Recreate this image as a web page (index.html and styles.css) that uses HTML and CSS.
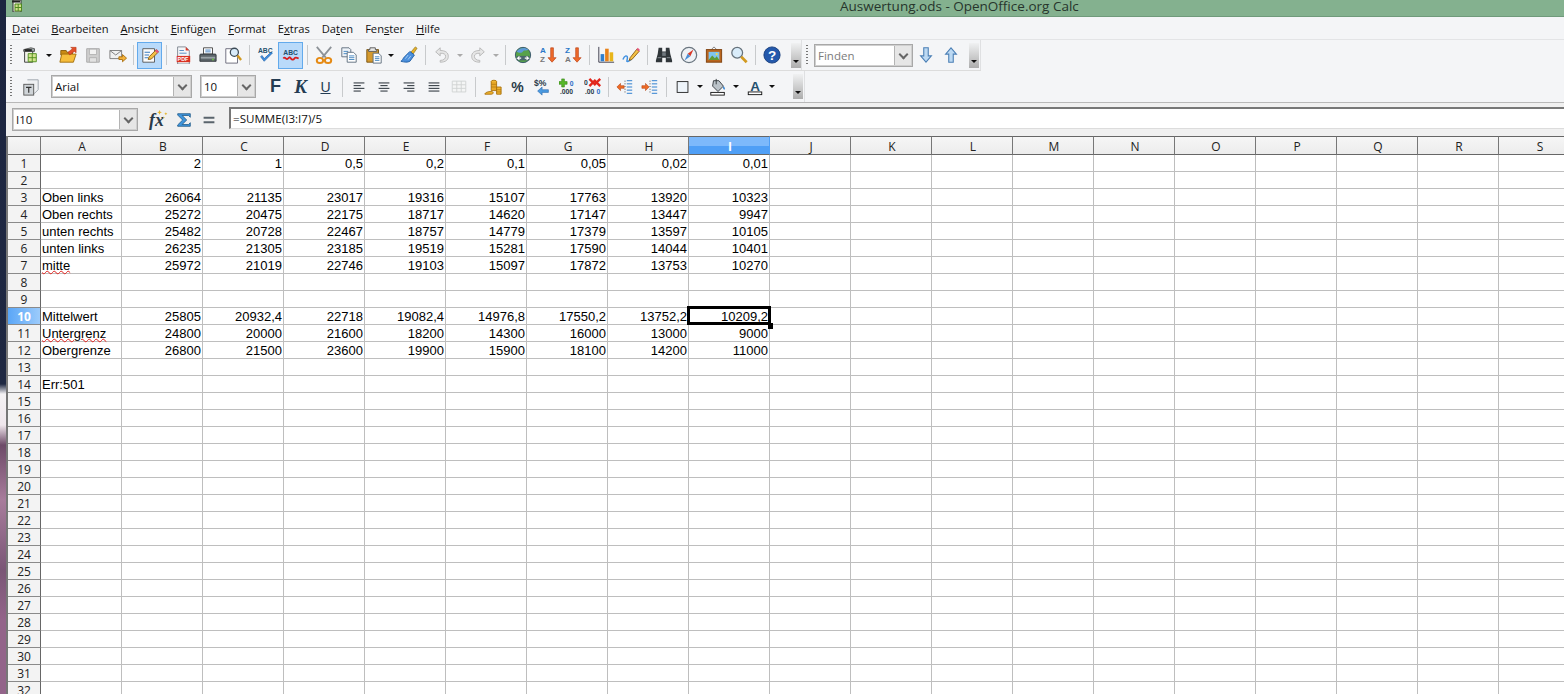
FILE: index.html
```html
<!DOCTYPE html>
<html lang="de">
<head>
<meta charset="utf-8">
<title>Auswertung.ods - OpenOffice.org Calc</title>
<link rel="stylesheet" href="styles.css">
</head>
<body>
<div class="wall"></div>
<div class="app">
  <header class="title">
    <svg class="appicon" viewBox="0 0 12 12"><path d="M2 0h8v12H2z" fill="#f4f4ea" stroke="#333"/><path d="M1 1.500h8" stroke="#222" stroke-width="2"/><path d="M4 4h6.500v7H4z" fill="#cfe08a" stroke="#4f8a1e"/><path d="M7.200 4v7M4 7.500h6.500" stroke="#4f8a1e"/></svg>
    <span class="title-text">Auswertung.ods - OpenOffice.org Calc</span>
  </header>
  <nav class="menu">
    <span><u>D</u>atei</span><span><u>B</u>earbeiten</span><span><u>A</u>nsicht</span><span><u>E</u>infügen</span><span><u>F</u>ormat</span><span>E<u>x</u>tras</span><span>Da<u>t</u>en</span><span>Fen<u>s</u>ter</span><span><u>H</u>ilfe</span>
  </nav>

  <div class="row">
    <div class="tb tb1">
      <i class="grip"></i>
      <span class="i"><svg viewBox="0 0 20 20"><path d="M3 4l8-2 4 1v3H3z" fill="#9aa5a5" stroke="#555"/><path d="M4 6h9v12H4z" fill="#f2f2ea" stroke="#333"/><path d="M4 4.500h8" stroke="#222" stroke-width="2"/><path d="M8 8.500h9v9H8z" fill="#d3e38e" stroke="#4c8c1a"/><path d="M12.500 8.500v9M8 13h9" stroke="#4c8c1a"/></svg></span>
      <span class="d w13"></span>
      <span class="i"><svg viewBox="0 0 20 20"><path d="M2 5h6l1 2h6v3H2z" fill="#c98a12" stroke="#8a5a08"/><path d="M1 18l2-9h16l-3 9z" fill="#f6bd3b" stroke="#a06c0c"/><path d="M10 7l5-4-2-1.500h6v6l-2-1.500-5 4z" fill="#e2502a" stroke="#b23414" stroke-width=".6"/></svg></span>
      <span class="i"><svg viewBox="0 0 20 20"><path d="M3 3h14v15H3z" fill="#cfcfcf" stroke="#a8a8a8"/><path d="M6 3.500h8v6H6z" fill="#f2f2f2" stroke="#b0b0b0"/><path d="M6 13h8v5H6z" fill="#e2e2e2" stroke="#b0b0b0"/></svg></span>
      <span class="i"><svg viewBox="0 0 20 20"><path d="M1 5h13v9H1z" fill="#f0f0f0" stroke="#777"/><path d="M1 5l6.500 5L14 5" fill="none" stroke="#777"/><path d="M11 12h4v-2.500l4.500 4-4.500 4V15h-4z" fill="#f3b23a" stroke="#a96e0e"/></svg></span>
      <span class="s s7"></span>
      <span class="i hl"><svg viewBox="0 0 20 20"><path d="M2 3h13v15H2z" fill="#fbfbfb" stroke="#555"/><path d="M4 7h6M4 10h5M4 13h4" stroke="#3a7bbf" stroke-width="1.200"/><path d="M8 15l1-3 8-8 2.500 2.500-8 8z" fill="#f4c145" stroke="#8a5a10"/><path d="M15.500 5.500l2-2 2.500 2.500-2 2z" fill="#e4577a"/></svg></span>
      <span class="s s8"></span>
      <span class="i"><svg viewBox="0 0 20 20"><path d="M4 1h9l4 4v15H4z" fill="#f4f6f8" stroke="#7d8590"/><path d="M6 5h5M6 8h8" stroke="#4d87bd"/><path d="M13 1l4 4h-4z" fill="#d83a2a"/><rect x="3" y="11" width="15" height="7" fill="#d93223"/><text x="4" y="17" class="pdf">PDF</text></svg></span>
      <span class="i"><svg viewBox="0 0 20 20"><path d="M5 2h10v7H5z" fill="#fff" stroke="#444"/><path d="M7 4.500h6M7 6.500h6" stroke="#3a7bbf"/><path d="M2 9h16a1 1 0 0 1 1 1v7H1v-7a1 1 0 0 1 1-1z" fill="#5d666b" stroke="#30363a"/><path d="M2 13h16" stroke="#9aa3a8" stroke-width="2"/><circle cx="15.500" cy="15" r="1" fill="#6ccb3e"/></svg></span>
      <span class="i"><svg viewBox="0 0 20 20"><path d="M2 3h10l3 3v13H2z" fill="#fff" stroke="#667"/><circle cx="11.500" cy="7" r="4.500" fill="#d9ecfa" stroke="#3c4a55" stroke-width="1.400"/><path d="M15 10.500l4 5" stroke="#d29a20" stroke-width="2.600"/></svg></span>
      <span class="s s8"></span>
      <span class="i"><svg viewBox="0 0 20 20"><text x="1" y="8" class="abc">ABC</text><path d="M4 12l4 5 9-9-1.500-1L8 14l-2.500-3.500z" fill="#3f8fe0" stroke="#1d5ea6" stroke-width=".7"/></svg></span>
      <span class="i hl"><svg viewBox="0 0 20 20"><text x="1.500" y="10" class="abc">ABC</text><path d="M1.500 14c2-3 3 2 5 0s2-2 3.500 0 3 1 4-.5 2-1 4.500 .5" fill="none" stroke="#d81e1e" stroke-width="2"/></svg></span>
      <span class="s s8"></span>
      <span class="i"><svg viewBox="0 0 20 20"><path d="M2 1l10 12M18 1L8 13" stroke="#8d9298" stroke-width="2"/><ellipse cx="5.500" cy="16" rx="3.500" ry="2.800" fill="none" stroke="#e58a14" stroke-width="2.200"/><ellipse cx="14.500" cy="16" rx="3.500" ry="2.800" fill="none" stroke="#e58a14" stroke-width="2.200"/></svg></span>
      <span class="i"><svg viewBox="0 0 20 20"><path d="M2 2h8l2 2v8H2z" fill="#eef3f8" stroke="#5b6b7a"/><path d="M4 6h5M4 8.500h5" stroke="#3f83c0"/><path d="M8 7h7l3 3v8H8z" fill="#fff" stroke="#5b6b7a"/><path d="M10 11h6M10 13h6M10 15h6" stroke="#3f83c0"/></svg></span>
      <span class="i"><svg viewBox="0 0 20 20"><path d="M2 4h13v14H2z" fill="#d59a2e" stroke="#77510e"/><path d="M5.500 4V2h6v2h1.500v2H4V4z" fill="#e8e8e8" stroke="#555"/><path d="M9 8h6l3 3v8H9z" fill="#fff" stroke="#5b6b7a"/><path d="M11 12h5M11 14h5M11 16h5" stroke="#3f83c0"/></svg></span>
      <span class="d w10"></span>
      <span class="i"><svg viewBox="0 0 20 20"><path d="M12 7l5-6 2 1.500-4.500 6.500z" fill="#e5b22a" stroke="#8b6a10" stroke-width=".7"/><path d="M11 6l5 4-5 7c-3 1.500-6 1-10 0 2-1 2-3 4-5z" fill="#4b8fdc" stroke="#1f5da5"/><path d="M6 14l3-4M9 15l3-4" stroke="#a9d0f5"/></svg></span>
      <span class="s s8"></span>
      <span class="i"><svg viewBox="0 0 20 20"><path d="M8 2L3 6.500 8 11V8c4 0 6 1 6 3.500S12 16 8 16v2c6 0 9-2.500 9-6.500S14 5 8 5z" fill="#e6e6e6" stroke="#b5b5b5"/></svg></span>
      <span class="d w11 off"></span>
      <span class="i"><svg viewBox="0 0 20 20"><path d="M12 2l5 4.500L12 11V8C8 8 6 9 6 11.500S8 16 12 16v2c-6 0-9-2.500-9-6.500S6 5 12 5z" fill="#e6e6e6" stroke="#b5b5b5"/></svg></span>
      <span class="d w11 off"></span>
      <span class="s s9"></span>
      <span class="i"><svg viewBox="0 0 20 20"><circle cx="10" cy="10" r="8.500" fill="#57a24a" stroke="#33506a"/><path d="M3 6c3-4 9-5 13-2-2 2-5 0-6 2s-5 2-7 0z" fill="#5d9ad8"/><path d="M3 11h14v5H3z" fill="#49606f" opacity=".9"/><path d="M8 13.500H4l2-2M4 13.500l2 2M12 13.500h4l-2-2M16 13.500l-2 2" fill="none" stroke="#fff" stroke-width="1.200"/></svg></span>
      <span class="i"><svg viewBox="0 0 20 20"><text x="1" y="8" class="az az-a">A</text><text x="1" y="18" class="az az-z">Z</text><path d="M13 2v11h-3l4.500 5 4.500-5h-3V2z" fill="#ef6a2a" stroke="#b73c10" stroke-width=".7"/></svg></span>
      <span class="i"><svg viewBox="0 0 20 20"><text x="1" y="8" class="az az-b">Z</text><text x="1" y="18" class="az az-g">A</text><path d="M13 2v11h-3l4.500 5 4.500-5h-3V2z" fill="#ef6a2a" stroke="#b73c10" stroke-width=".7"/></svg></span>
      <span class="s s8"></span>
      <span class="i"><svg viewBox="0 0 20 20"><path d="M2 1v17h17" fill="none" stroke="#334"/><rect x="4" y="9" width="4" height="8" fill="#2f7fcf"/><rect x="9" y="3" width="4" height="14" fill="#e8821a"/><rect x="14" y="7" width="4" height="10" fill="#e8b51a"/></svg></span>
      <span class="i"><svg viewBox="0 0 20 20"><path d="M1 15c2-5 5-5 5-2s-2 5 1 4 4-4 5-4" fill="none" stroke="#3f8fe0" stroke-width="1.600"/><path d="M9 13l-1 3 3-1 8-9-2.500-2.500z" fill="#f4c145" stroke="#8a5a10"/><path d="M16 3.500l1.500-1.500 2.500 2.500-1.500 1.500z" fill="#e4577a"/></svg></span>
      <span class="s s8"></span>
      <span class="i"><svg viewBox="0 0 20 20"><path d="M4 2h4v4h4V2h4l1 7 2 7v2h-7v-5H8v5H1v-2l2-7z" fill="#30363a"/><rect x="8" y="7" width="4" height="4" fill="#70787e"/><path d="M3 13h4M13 13h4" stroke="#8c959a"/></svg></span>
      <span class="i"><svg viewBox="0 0 20 20"><circle cx="10" cy="10" r="8.500" fill="#eef2f6" stroke="#6b7680" stroke-width="1.400"/><path d="M15 4l-3.500 7.500-3-3z" fill="#d93a2a"/><path d="M5 16l3.500-7.500 3 3z" fill="#4a8ed6"/></svg></span>
      <span class="i"><svg viewBox="0 0 20 20"><path d="M7 4l3-3 3 3" fill="none" stroke="#777"/><rect x="1.500" y="4" width="17" height="14" fill="#b9651e" stroke="#7d3f0c"/><rect x="4" y="6.500" width="12" height="9" fill="#7fc4ee"/><path d="M4 15.500l4-5 3 3 2-2 3 4z" fill="#5f9b35"/><circle cx="13" cy="9" r="1.200" fill="#f7d94a"/></svg></span>
      <span class="i"><svg viewBox="0 0 20 20"><circle cx="8" cy="7.500" r="6" fill="#d9ecfa" stroke="#66727c" stroke-width="1.400"/><path d="M12.500 12l6 6" stroke="#d29a20" stroke-width="3"/></svg></span>
      <span class="s s8"></span>
      <span class="i"><svg viewBox="0 0 20 20"><circle cx="10" cy="10" r="9" fill="#2459ac" stroke="#173d7c"/><text x="10" y="15.500" class="help">?</text></svg></span>
      <span class="more more1"></span>
    </div>
    <div class="tb find">
      <i class="grip"></i>
      <div class="combo c-find"><span class="ph">Finden</span><b></b></div>
      <span class="i"><svg viewBox="0 0 20 20"><path d="M7.500 2h5v9H16l-6 7-6-7h3.500z" fill="#bcd9f3" stroke="#4b7fb5" stroke-width="1.200"/></svg></span>
      <span class="i"><svg viewBox="0 0 20 20"><path d="M7.500 18h5V9H16l-6-7-6 7h3.500z" fill="#bcd9f3" stroke="#4b7fb5" stroke-width="1.200"/></svg></span>
      <span class="more more2"></span>
    </div>
  </div>

  <div class="row row2">
    <div class="tb tb2">
      <i class="grip"></i>
      <span class="i"><svg viewBox="0 0 20 20"><path d="M6 2h12v11l-4 4H9" fill="#eef0f2" stroke="#9aa3aa"/><rect x="2" y="7" width="11" height="12" fill="#cfd4d8" stroke="#555"/><path d="M4.500 10.500h6M7.500 10.500v6" stroke="#333" stroke-width="1.300"/></svg></span>
      <div class="combo c-font"><span>Arial</span><b></b></div>
      <div class="combo c-size"><span>10</span><b></b></div>
      <span class="i fmt f-b">F</span>
      <span class="i fmt f-i">K</span>
      <span class="i fmt f-u">U</span>
      <span class="s s8"></span>
      <span class="i"><svg viewBox="0 0 20 20"><path d="M4 5h12M4 8h8M4 11h12M4 14h8" stroke="#222a33" stroke-width="1.100" transform="translate(0 .5)"/></svg></span>
      <span class="i"><svg viewBox="0 0 20 20"><path d="M4 5h12M6 8h8M4 11h12M6 14h8" stroke="#222a33" stroke-width="1.100" transform="translate(0 .5)"/></svg></span>
      <span class="i"><svg viewBox="0 0 20 20"><path d="M4 5h12M8 8h8M4 11h12M8 14h8" stroke="#222a33" stroke-width="1.100" transform="translate(0 .5)"/></svg></span>
      <span class="i"><svg viewBox="0 0 20 20"><path d="M4 5h12M4 8h12M4 11h12M4 14h12" stroke="#222a33" stroke-width="1.100" transform="translate(0 .5)"/></svg></span>
      <span class="i"><svg viewBox="0 0 20 20"><path d="M2.500 3.500h15v12h-15zM2.500 7.500h15M2.500 11.500h15M7.500 3.500v12M12.500 3.500v12" fill="#f4f5f5" stroke="#cfd3d3"/></svg></span>
      <span class="s s9"></span>
      <span class="i"><svg viewBox="0 0 20 20"><ellipse cx="11" cy="4" rx="3" ry="1.500" fill="#f3c23c" stroke="#a9710c"/><path d="M8 4v10h6V4" fill="#e9a827" stroke="#a9710c"/><path d="M14 10h5v8h-5z" fill="#f0b42e" stroke="#a9710c"/><path d="M1 18c0-2 4-3 7-3s3 3 0 3z" fill="#f0b42e" stroke="#a9710c"/><path d="M8 7h6M8 10h6M14 13h5M14 15.500h5" stroke="#a9710c" stroke-width=".7"/></svg></span>
      <span class="i fmt f-pct">%</span>
      <span class="i"><svg viewBox="0 0 20 20"><text x="0" y="9" class="mono">$%</text><path d="M9 11h7v3H9v3l-5-4.500L9 8z" fill="#4a9ae0" stroke="#1d5ea6" stroke-width=".6" transform="translate(0 2)"/></svg></span>
      <span class="i"><svg viewBox="0 0 20 20"><path d="M3 1h3v3h3v3H6v3H3V7H0V4h3z" fill="#58b82a" stroke="#2c7c0c" stroke-width=".6"/><text x="12" y="9" class="dec blue">0</text><text x="1" y="18" class="dec">.000</text></svg></span>
      <span class="i"><svg viewBox="0 0 20 20"><text x="0" y="8" class="dec">0</text><path d="M6 1l6 6 6-6M6 9l6-6 6 6" fill="none" stroke="#e2261c" stroke-width="2.600"/><text x="1" y="18" class="dec">.00</text><text x="14" y="18" class="dec blue">0</text></svg></span>
      <span class="s s7"></span>
      <span class="i"><svg viewBox="0 0 20 20"><path d="M12 3h6M12 6.500h6M12 10h6M12 13.500h6M12 17h6" stroke="#2f7fcf" stroke-width="1.100"/><path d="M10 3v14" stroke="#333" stroke-dasharray="1 2"/><path d="M9 8.500H5V6l-4 4 4 4v-2.500h4z" fill="#ee6a24" stroke="#b03c0c" stroke-width=".6"/></svg></span>
      <span class="i"><svg viewBox="0 0 20 20"><path d="M12 3h6M12 6.500h6M12 10h6M12 13.500h6M12 17h6" stroke="#2f7fcf" stroke-width="1.100"/><path d="M10 3v14" stroke="#333" stroke-dasharray="1 2"/><path d="M1 8.500h4V6l4 4-4 4v-2.500H1z" fill="#ee6a24" stroke="#b03c0c" stroke-width=".6"/></svg></span>
      <span class="s s8"></span>
      <span class="i"><svg viewBox="0 0 20 20"><rect x="3.500" y="4" width="12" height="12" fill="#eef4fa" stroke="#222"/></svg></span>
      <span class="d w10"></span>
      <span class="i"><svg viewBox="0 0 20 20"><path d="M5 3h6l5 6-6 6-6-6z" fill="#bcc4ca" stroke="#30363a"/><path d="M8 1v6" stroke="#30363a"/><path d="M16 9c2 2 2 4 1 4s-2-2-1-4z" fill="#2f7fcf"/><rect x="2" y="16" width="15" height="3" fill="#fff" stroke="#111"/></svg></span>
      <span class="d w12"></span>
      <span class="i"><svg viewBox="0 0 20 20"><text x="10" y="14" class="acol">A</text><rect x="2.500" y="15.500" width="15" height="3" fill="#fff" stroke="#111"/></svg></span>
      <span class="d w10"></span>
      <span class="more more3"></span>
    </div>
  </div>

  <div class="fbar">
    <div class="combo c-name"><span>I10</span><b></b></div>
    <span class="i"><svg class="big" viewBox="0 0 20 20"><text x="1" y="16" class="fx">fx</text><path d="M11 1l.7 1.500 1.500.7-1.500.7L11 5.500l-.7-1.600-1.500-.7 1.500-.7zM17 3l.5 1 1 .5-1 .5-.5 1-.5-1-1-.5 1-.5zM15 7l.4.800.800.400-.800.400-.4.800-.4-.800-.800-.400.800.400z" fill="#e6b42a"/></svg></span>
    <span class="i"><svg viewBox="0 0 20 20"><path d="M3 3h14v4l-2-2H8l5 5-5 5h7l2-2v4H3v-1.500L8.500 10 3 4.500z" fill="#3f95dc" stroke="#14507f" stroke-width=".8"/></svg></span>
    <span class="i"><svg viewBox="0 0 20 20"><path d="M4 7.500h12M4 12.500h12" stroke="#5a646c" stroke-width="2"/></svg></span>
    <div class="finput">=SUMME(I3:I7)/5</div>
  </div>

  <div class="sheet">
    <table class="grid">
      <colgroup><col class="c0"><col span="19" class="cn"></colgroup>
      <thead>
        <tr><th></th><th>A</th><th>B</th><th>C</th><th>D</th><th>E</th><th>F</th><th>G</th><th>H</th><th class="sel">I</th><th>J</th><th>K</th><th>L</th><th>M</th><th>N</th><th>O</th><th>P</th><th>Q</th><th>R</th><th>S</th></tr>
      </thead>
      <tbody>
        <tr><th>1</th><td></td><td>2</td><td>1</td><td>0,5</td><td>0,2</td><td>0,1</td><td>0,05</td><td>0,02</td><td>0,01</td><td></td><td></td><td></td><td></td><td></td><td></td><td></td><td></td><td></td><td></td></tr>
        <tr><th>2</th><td></td><td></td><td></td><td></td><td></td><td></td><td></td><td></td><td></td><td></td><td></td><td></td><td></td><td></td><td></td><td></td><td></td><td></td><td></td></tr>
        <tr><th>3</th><td>Oben links</td><td>26064</td><td>21135</td><td>23017</td><td>19316</td><td>15107</td><td>17763</td><td>13920</td><td>10323</td><td></td><td></td><td></td><td></td><td></td><td></td><td></td><td></td><td></td><td></td></tr>
        <tr><th>4</th><td>Oben rechts</td><td>25272</td><td>20475</td><td>22175</td><td>18717</td><td>14620</td><td>17147</td><td>13447</td><td>9947</td><td></td><td></td><td></td><td></td><td></td><td></td><td></td><td></td><td></td><td></td></tr>
        <tr><th>5</th><td>unten rechts</td><td>25482</td><td>20728</td><td>22467</td><td>18757</td><td>14779</td><td>17379</td><td>13597</td><td>10105</td><td></td><td></td><td></td><td></td><td></td><td></td><td></td><td></td><td></td><td></td></tr>
        <tr><th>6</th><td>unten links</td><td>26235</td><td>21305</td><td>23185</td><td>19519</td><td>15281</td><td>17590</td><td>14044</td><td>10401</td><td></td><td></td><td></td><td></td><td></td><td></td><td></td><td></td><td></td><td></td></tr>
        <tr><th>7</th><td><span class="wavy">mitte</span></td><td>25972</td><td>21019</td><td>22746</td><td>19103</td><td>15097</td><td>17872</td><td>13753</td><td>10270</td><td></td><td></td><td></td><td></td><td></td><td></td><td></td><td></td><td></td><td></td></tr>
        <tr><th>8</th><td></td><td></td><td></td><td></td><td></td><td></td><td></td><td></td><td></td><td></td><td></td><td></td><td></td><td></td><td></td><td></td><td></td><td></td><td></td></tr>
        <tr><th>9</th><td></td><td></td><td></td><td></td><td></td><td></td><td></td><td></td><td></td><td></td><td></td><td></td><td></td><td></td><td></td><td></td><td></td><td></td><td></td></tr>
        <tr><th class="sel">10</th><td>Mittelwert</td><td>25805</td><td>20932,4</td><td>22718</td><td>19082,4</td><td>14976,8</td><td>17550,2</td><td>13752,2</td><td class="cur">10209,2</td><td></td><td></td><td></td><td></td><td></td><td></td><td></td><td></td><td></td><td></td></tr>
        <tr><th>11</th><td><span class="wavy">Untergrenz</span></td><td>24800</td><td>20000</td><td>21600</td><td>18200</td><td>14300</td><td>16000</td><td>13000</td><td>9000</td><td></td><td></td><td></td><td></td><td></td><td></td><td></td><td></td><td></td><td></td></tr>
        <tr><th>12</th><td>Obergrenze</td><td>26800</td><td>21500</td><td>23600</td><td>19900</td><td>15900</td><td>18100</td><td>14200</td><td>11000</td><td></td><td></td><td></td><td></td><td></td><td></td><td></td><td></td><td></td><td></td></tr>
        <tr><th>13</th><td></td><td></td><td></td><td></td><td></td><td></td><td></td><td></td><td></td><td></td><td></td><td></td><td></td><td></td><td></td><td></td><td></td><td></td><td></td></tr>
        <tr><th>14</th><td>Err:501</td><td></td><td></td><td></td><td></td><td></td><td></td><td></td><td></td><td></td><td></td><td></td><td></td><td></td><td></td><td></td><td></td><td></td><td></td></tr>
        <tr><th>15</th><td></td><td></td><td></td><td></td><td></td><td></td><td></td><td></td><td></td><td></td><td></td><td></td><td></td><td></td><td></td><td></td><td></td><td></td><td></td></tr>
        <tr><th>16</th><td></td><td></td><td></td><td></td><td></td><td></td><td></td><td></td><td></td><td></td><td></td><td></td><td></td><td></td><td></td><td></td><td></td><td></td><td></td></tr>
        <tr><th>17</th><td></td><td></td><td></td><td></td><td></td><td></td><td></td><td></td><td></td><td></td><td></td><td></td><td></td><td></td><td></td><td></td><td></td><td></td><td></td></tr>
        <tr><th>18</th><td></td><td></td><td></td><td></td><td></td><td></td><td></td><td></td><td></td><td></td><td></td><td></td><td></td><td></td><td></td><td></td><td></td><td></td><td></td></tr>
        <tr><th>19</th><td></td><td></td><td></td><td></td><td></td><td></td><td></td><td></td><td></td><td></td><td></td><td></td><td></td><td></td><td></td><td></td><td></td><td></td><td></td></tr>
        <tr><th>20</th><td></td><td></td><td></td><td></td><td></td><td></td><td></td><td></td><td></td><td></td><td></td><td></td><td></td><td></td><td></td><td></td><td></td><td></td><td></td></tr>
        <tr><th>21</th><td></td><td></td><td></td><td></td><td></td><td></td><td></td><td></td><td></td><td></td><td></td><td></td><td></td><td></td><td></td><td></td><td></td><td></td><td></td></tr>
        <tr><th>22</th><td></td><td></td><td></td><td></td><td></td><td></td><td></td><td></td><td></td><td></td><td></td><td></td><td></td><td></td><td></td><td></td><td></td><td></td><td></td></tr>
        <tr><th>23</th><td></td><td></td><td></td><td></td><td></td><td></td><td></td><td></td><td></td><td></td><td></td><td></td><td></td><td></td><td></td><td></td><td></td><td></td><td></td></tr>
        <tr><th>24</th><td></td><td></td><td></td><td></td><td></td><td></td><td></td><td></td><td></td><td></td><td></td><td></td><td></td><td></td><td></td><td></td><td></td><td></td><td></td></tr>
        <tr><th>25</th><td></td><td></td><td></td><td></td><td></td><td></td><td></td><td></td><td></td><td></td><td></td><td></td><td></td><td></td><td></td><td></td><td></td><td></td><td></td></tr>
        <tr><th>26</th><td></td><td></td><td></td><td></td><td></td><td></td><td></td><td></td><td></td><td></td><td></td><td></td><td></td><td></td><td></td><td></td><td></td><td></td><td></td></tr>
        <tr><th>27</th><td></td><td></td><td></td><td></td><td></td><td></td><td></td><td></td><td></td><td></td><td></td><td></td><td></td><td></td><td></td><td></td><td></td><td></td><td></td></tr>
        <tr><th>28</th><td></td><td></td><td></td><td></td><td></td><td></td><td></td><td></td><td></td><td></td><td></td><td></td><td></td><td></td><td></td><td></td><td></td><td></td><td></td></tr>
        <tr><th>29</th><td></td><td></td><td></td><td></td><td></td><td></td><td></td><td></td><td></td><td></td><td></td><td></td><td></td><td></td><td></td><td></td><td></td><td></td><td></td></tr>
        <tr><th>30</th><td></td><td></td><td></td><td></td><td></td><td></td><td></td><td></td><td></td><td></td><td></td><td></td><td></td><td></td><td></td><td></td><td></td><td></td><td></td></tr>
        <tr><th>31</th><td></td><td></td><td></td><td></td><td></td><td></td><td></td><td></td><td></td><td></td><td></td><td></td><td></td><td></td><td></td><td></td><td></td><td></td><td></td></tr>
        <tr><th>32</th><td></td><td></td><td></td><td></td><td></td><td></td><td></td><td></td><td></td><td></td><td></td><td></td><td></td><td></td><td></td><td></td><td></td><td></td><td></td></tr>
      </tbody>
    </table>
  </div>
</div>
</body>
</html>
```
FILE: styles.css
```css
* { box-sizing: border-box; }
html, body { height: 100%; }
body {
  margin: 0;
  display: flex;
  overflow: hidden;
  background: #fff;
  font-family: "Open Sans", "Noto Sans", sans-serif;
  color: #111;
}

/* Desktop wallpaper visible at the left of the window */
.wall {
  flex: 0 0 6px;
  background: linear-gradient(to bottom, #1c2540 0, #1f2842 384px, #f4f2f4 394px, #efe6ec 425px, #6d4a68 445px, #a87c9c 500px, #7a5676 570px, #93648a 620px, #93648a 694px);
}

.app {
  flex: 1;
  min-width: 0;
  display: flex;
  flex-direction: column;
  background: #f4f5f7;
}

/* Title bar */
.title {
  flex: 0 0 17px;
  display: flex;
  background: #84b18f;
  border-bottom: 1px solid #6f9a7b;
  overflow: hidden;
}
.appicon { width: 12px; height: 12px; margin-left: 5px; flex: none; }
.title-text {
  margin-left: 817px;
  font-size: 13.500px;
  line-height: 13px;
  color: #27352c;
  white-space: nowrap;
}

/* Menu bar */
.menu {
  flex: 0 0 23px;
  display: flex;
  align-items: center;
  padding-left: 6px;
  border-bottom: 1px solid #e3e4e6;
  font-size: 11.150px;
  color: #111;
}
.menu span { margin-right: 12px; white-space: nowrap; }

/* Toolbars */
.row { flex: 0 0 31px; display: flex; border-bottom: 1px solid #dcdcdc; width: 975px; }
.row2 { border-bottom: 0; width: 100%; }
.tb { display: flex; align-items: center; height: 30px; }
.tb1 { width: 796px; border-right: 1px solid #dfe0e2; }
.tb2 { width: 799px; height: 31px; border-right: 1px solid #dfe0e2; }
.find { flex: 1; border-right: 1px solid #dfe0e2; }
.grip {
  flex: none;
  width: 2px;
  height: 20px;
  margin: 0 5px 0 4px;
  background: repeating-linear-gradient(to bottom, #777 0 1px, transparent 1px 3px);
}
.tb2 .grip { margin-right: 6px; }
.find .grip { margin-right: 6px; }

.i {
  flex: 0 0 25px;
  height: 27px;
  display: flex;
  align-items: center;
  justify-content: center;
}
.i svg { width: 18px; height: 18px; display: block; }
.i svg.big { width: 21px; height: 21px; }
.hl { background: #b9dafa; border: 1px solid #63aaec; }

.d { flex: none; height: 27px; display: flex; align-items: center; justify-content: center; }
.d::after {
  content: "";
  border: 3px solid transparent;
  border-top: 3px solid #111;
  border-bottom: 0;
  border-left-width: 3.500px;
  border-right-width: 3.500px;
}
.d.off::after { border-top-color: #aaa; }
.w10 { width: 10px; }
.w11 { width: 11px; }
.w12 { width: 12px; }
.w13 { width: 13px; }

.s { flex: none; height: 20px; display: flex; justify-content: center; }
.s::after { content: ""; width: 1px; background: #c8cacc; }
.s7 { width: 7px; }
.s8 { width: 8px; }
.s9 { width: 9px; }

.more {
  flex: none;
  width: 10px;
  height: 25px;
  display: flex;
  align-items: flex-end;
  justify-content: center;
  padding-bottom: 5px;
  background: linear-gradient(to bottom, #f0f1f2, #adadad);
}
.more::after {
  content: "";
  border: 3.500px solid transparent;
  border-top: 3px solid #111;
  border-bottom: 0;
}
.more1 { margin-left: 7px; }
.more2 { margin-left: 6px; }
.more3 { margin-left: 16px; }

/* Combo boxes */
.combo {
  flex: none;
  display: flex;
  align-items: center;
  justify-content: space-between;
  background: #fff;
  border: 1px solid #a8a8a8;
  box-shadow: inset 0 0 0 1px #cfcfcf;
  padding: 1px 1px 1px 3px;
  height: 23px;
  font-size: 11.500px;
  color: #111;
}
.combo b {
  flex: none;
  width: 17px;
  height: 100%;
  display: flex;
  align-items: center;
  justify-content: center;
  background: #e6e6e6;
  border-left: 1px solid #b4b4b4;
}
.combo b::after {
  content: "";
  width: 5px;
  height: 5px;
  margin-top: -2px;
  border-right: 2px solid #666;
  border-bottom: 2px solid #666;
  transform: rotate(45deg);
}
.c-font { width: 141px; margin-left: 8px; }
.c-size { width: 56px; margin: 0 7px 0 8px; }
.c-find { width: 99px; }
.c-name { width: 126px; margin: 5px 8px 0 6px; height: 23px; font-size: 11.500px; }
.ph { color: #7c7c7c; }

/* Character format buttons */
.fmt { font-family: "Liberation Sans", sans-serif; color: #243c52; font-size: 15px; }
.f-b { font-weight: 700; font-size: 18px; }
.f-i { font-style: italic; font-weight: 700; font-family: "Liberation Serif", serif; font-size: 19px; }
.f-u { text-decoration: underline; font-size: 14px; }
.f-pct { font-weight: 700; font-size: 14px; color: #2a3a48; }

/* Text inside icons */
.pdf { font: 700 6px "Liberation Sans", sans-serif; fill: #fff; }
.abc { font: 700 7.500px "Liberation Sans", sans-serif; fill: #24506e; }
.az { font: 700 9px "Liberation Sans", sans-serif; }
.az-a { fill: #2a78c8; }
.az-z { fill: #777; }
.az-b { fill: #2a78c8; }
.az-g { fill: #777; }
.help { font: 700 15px "Liberation Sans", sans-serif; fill: #fff; text-anchor: middle; }
.mono { font: 700 9.500px "Liberation Sans", sans-serif; fill: #2a3a48; }
.dec { font: 700 7.500px "Liberation Sans", sans-serif; fill: #2a3a48; }
.blue { fill: #2a6ec8; }
.acol { font: 700 15px "Liberation Sans", sans-serif; fill: #24506e; text-anchor: middle; }
.fx { font: italic 700 17px "Liberation Serif", serif; fill: #2a3a48; }

/* Formula bar */
.fbar {
  flex: 0 0 34px;
  display: flex;
  align-items: flex-start;
  background: #f0f0f0;
  border-top: 1px solid #b8b8b8;
  font-size: 12px;
}
.fbar .i { margin-top: 3px; }
.finput {
  flex: 1;
  height: 22px;
  margin: 4px 0 0 8px;
  padding: 1px 0 0 2px;
  background: #fff;
  border-top: 2px solid #777;
  border-left: 2px solid #777;
  border-bottom: 1px solid #dcdcdc;
  font-size: 11.600px;
  line-height: 17px;
  white-space: nowrap;
}

/* Sheet */
.sheet {
  flex: 1;
  min-height: 0;
  overflow: hidden;
  background: #fff;
  border-left: 2px solid #777;
}
.grid {
  table-layout: fixed;
  width: 1572px;
  border-collapse: separate;
  border-spacing: 0;
  font-family: "Liberation Sans", Arial, sans-serif;
  font-size: 13px;
  color: #000;
}
.c0 { width: 33px; }
.cn { width: 81px; }
.grid tr { height: 17px; }
.grid th, .grid td {
  padding: 2px 0 0;
  height: 17px;
  line-height: 14px;
  overflow: visible;
  white-space: nowrap;
}
.grid td {
  padding: 2px 1px 0;
  text-align: right;
  border-right: 1px solid #bebebe;
  border-bottom: 1px solid #bebebe;
}
.grid td:nth-child(2) { text-align: left; }
.grid th {
  font-family: "Open Sans", "Noto Sans", sans-serif;
  font-weight: 400;
  font-size: 12px;
  color: #222;
  text-align: center;
  background: #f3f3f3;
  border-right: 1px solid #666;
  border-bottom: 1px solid #8a8a8a;
}
.grid thead th {
  height: 19px;
  padding-left: 2px;
  background: linear-gradient(to bottom, #f6f6f6, #ececec);
  border-top: 1px solid #666;
  border-bottom: 1px solid #666;
  border-right: 1px solid #777;
}
.grid th.sel, .grid thead th.sel {
  background: linear-gradient(to bottom, #7db9fb 0, #7db9fb 50%, #4f9ff6 50%, #4f9ff6 100%);
  color: #fff;
  font-weight: 700;
  border-right-color: #4f9ff6;
}
.grid tbody th.sel {
  background: linear-gradient(to right, #5aa6f7, #9ccbfb);
  border-right-color: #666;
}
.wavy {
  text-decoration: underline wavy #e0201c 1px;
  text-underline-offset: 0;
}
.grid td.cur { position: relative; }
.cur::before {
  content: "";
  position: absolute;
  top: -2px;
  left: -2px;
  right: -2px;
  bottom: -1px;
  border: 3px solid #000;
}
.cur::after {
  content: "";
  position: absolute;
  right: -4px;
  bottom: -5px;
  width: 5px;
  height: 6px;
  background: #000;
}
```
